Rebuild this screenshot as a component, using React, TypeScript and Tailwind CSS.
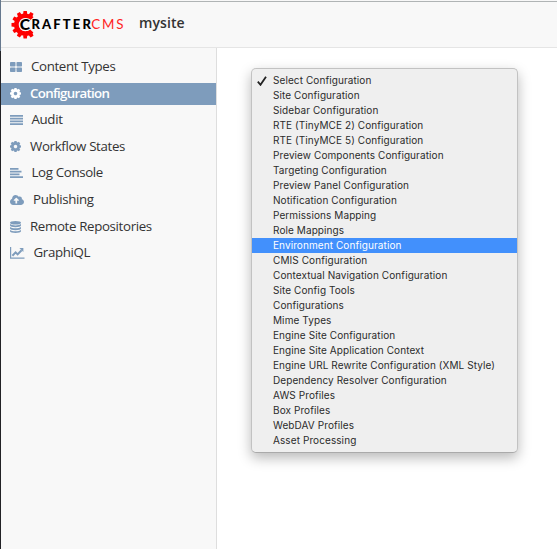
import React from "react";
import { FaCloudUploadAlt } from "react-icons/fa";

const TrendIcon = () => (
  <svg width="15" height="12" viewBox="0 0 15 12" fill="none" stroke="currentColor">
    <path d="M.6 0v11.2H14.5" strokeWidth="1.2" />
    <path d="M2.4 8.8 5.6 5.4l2 2 4-4.2" strokeWidth="2" />
    <path d="M9.4 1H13.4v4z" fill="currentColor" stroke="none" />
  </svg>
);

const GridIcon = () => (
  <svg width="12" height="10" viewBox="0 0 12 10" fill="currentColor">
    <rect width="5.5" height="4.5" rx=".8" />
    <rect x="6.5" width="5.5" height="4.5" rx=".8" />
    <rect y="5.5" width="5.5" height="4.5" rx=".8" />
    <rect x="6.5" y="5.5" width="5.5" height="4.5" rx=".8" />
  </svg>
);

const GearIcon = () => (
  <svg width="11" height="11" viewBox="0 0 11 11">
    <g transform="translate(5.5 5.5)">
      <circle r="3.1" fill="none" stroke="currentColor" strokeWidth="2.7" />
      {[0, 45, 90, 135, 180, 225, 270, 315].map((a) => (
        <path key={a} d="M3.6-1.4 5.6-1.1V1.1L3.6 1.4z" fill="currentColor" transform={`rotate(${a})`} />
      ))}
    </g>
  </svg>
);

const LinesIcon = ({ widths }: { widths: number[] }) => (
  <svg width="13" height="10" viewBox="0 0 13 10" fill="currentColor">
    {widths.map((w, i) => (
      <rect key={i} y={i * 2.75} width={w} height="1.75" />
    ))}
  </svg>
);

const DatabaseIcon = () => (
  <svg width="11" height="12" viewBox="0 0 11 12" fill="currentColor">
    <ellipse cx="5.5" cy="1.8" rx="5.5" ry="1.8" />
    <path d="M0 3.1c2 1.7 9 1.7 11 0V4.6c0 2.2-11 2.2-11 0z" />
    <path d="M0 6c2 1.7 9 1.7 11 0V7.5c0 2.2-11 2.2-11 0z" />
    <path d="M0 8.9c2 1.7 9 1.7 11 0V10.3c0 2.2-11 2.2-11 0z" />
  </svg>
);

const nav = [
  { label: "Content Types", icon: <GridIcon />, gap: "pl-[9px]" },
  { label: "Configuration", icon: <GearIcon />, gap: "pl-[9px]", active: true },
  { label: "Audit", icon: <LinesIcon widths={[13, 13, 13, 13]} />, gap: "pl-[8.5px]" },
  { label: "Workflow States", icon: <GearIcon />, gap: "pl-[9px]" },
  { label: "Log Console", icon: <LinesIcon widths={[8.5, 11.5, 9.5, 13]} />, gap: "pl-[8.5px]" },
  { label: "Publishing", icon: <FaCloudUploadAlt size={14} />, gap: "pl-[9px]" },
  { label: "Remote Repositories", icon: <DatabaseIcon />, gap: "pl-[9px]" },
  { label: "GraphiQL", icon: <TrendIcon />, gap: "pl-[8.5px]" },
];

const options = [
  "Select Configuration", "Site Configuration", "Sidebar Configuration",
  "RTE (TinyMCE 2) Configuration", "RTE (TinyMCE 5) Configuration",
  "Preview Components Configuration", "Targeting Configuration",
  "Preview Panel Configuration", "Notification Configuration",
  "Permissions Mapping", "Role Mappings", "Environment Configuration",
  "CMIS Configuration", "Contextual Navigation Configuration",
  "Site Config Tools", "Configurations", "Mime Types",
  "Engine Site Configuration", "Engine Site Application Context",
  "Engine URL Rewrite Configuration (XML Style)",
  "Dependency Resolver Configuration", "AWS Profiles", "Box Profiles",
  "WebDAV Profiles", "Asset Processing",
];

const Logo = () => (
  <svg width="114" height="30" viewBox="0 0 114 30" className="shrink-0">
    <g transform="translate(15.2 14.8)">
      <circle r="8.8" fill="none" stroke="#fe0000" strokeWidth="4.8" strokeDasharray="42 13.3" transform="rotate(43)" />
      {[60, 90, 120, 150, 180, 210, 240, 270, 300].map((a) => (
        <path key={a} d="M10.5-2.1 13.7-1.7V1.7L10.5 2.1z" fill="#fe0000" transform={`rotate(${a})`} />
      ))}
    </g>
    <g fontFamily="Lato, sans-serif">
      <text x="9.8" y="20.3" fontSize="15.5" fontWeight="900" stroke="#f8f8f8" strokeWidth="2" paintOrder="stroke">C</text>
      <text x="21.4" y="19.3" fontSize="13" fontWeight="900" textLength="59.5" lengthAdjust="spacing">RAFTER</text>
      <text x="81.2" y="19.3" fontSize="13.4" fontWeight="400" fill="#f22" textLength="32.3" lengthAdjust="spacing">CMS</text>
    </g>
  </svg>
);

export default function App() {
  return (
    <div className="flex h-[549px] w-[557px] overflow-hidden bg-white">
      <div className="flex w-px shrink-0 flex-col bg-[#222226]">
        <div className="h-[51px] bg-[#66788e]" />
      </div>
      <div className="flex min-w-0 flex-1 flex-col border-t border-[#f8f8f8]">
        <header className="flex h-[47px] shrink-0 items-start border-y border-t-[#b0b4b5] border-b-[#e5e5e5] bg-[#f8f8f8] pl-[9px] pt-2">
          <Logo />
          <h1 className="ml-[15px] mt-[3px] font-['Open_Sans','Noto_Sans',sans-serif] text-[14px] font-semibold leading-[20px] tracking-[0.1px] text-[#333]">mysite</h1>
        </header>
        <div className="flex min-h-0 flex-1">
          <nav className="w-[216px] shrink-0 border-r border-[#dedede] bg-[#f8f8f8] pt-[8px] font-['Open_Sans','Noto_Sans',sans-serif] text-[13.3px] tracking-[-0.35px] text-[#333]">
            {nav.map((n) => (
              <div
                key={n.label}
                className={`mb-[4.6px] flex h-[22px] items-center ${n.active ? "bg-[#7e9cbc] font-semibold tracking-[-0.7px] text-white" : ""}`}
              >
                <span className={`ml-[9px] flex shrink-0 items-center ${n.active ? "text-white" : "text-[#7e9cbc]"}`}>{n.icon}</span>
                <span className={`whitespace-nowrap ${n.gap}`}>{n.label}</span>
              </div>
            ))}
          </nav>
          <main className="pl-[34px] pt-5">
            <div className="h-[385px] w-[267px] rounded-[5px] border border-[#c2c2c2] border-b-[#aaa] bg-[#efefef] pt-[4px] shadow-[0_5px_13px_rgba(0,0,0,0.28)]">
              {options.map((o, i) => (
                <div
                  key={o}
                  className={`flex h-[15px] items-center whitespace-nowrap font-[Inter,sans-serif] text-[10px] leading-[15px] tracking-[0.09px] ${i === 11 ? "bg-[#4290fc] text-white" : "text-[#2b2b2b]"}`}
                >
                  <span className="flex w-[21px] shrink-0 pl-[5px]">
                    {i === 0 && (
                      <svg width="10" height="10" viewBox="0 0 10 10" fill="none" stroke="#222" strokeWidth="1.8">
                        <path d="M.8 5.7 3.5 8.8 9 .8" />
                      </svg>
                    )}
                  </span>
                  {o}
                </div>
              ))}
            </div>
          </main>
        </div>
      </div>
    </div>
  );
}
